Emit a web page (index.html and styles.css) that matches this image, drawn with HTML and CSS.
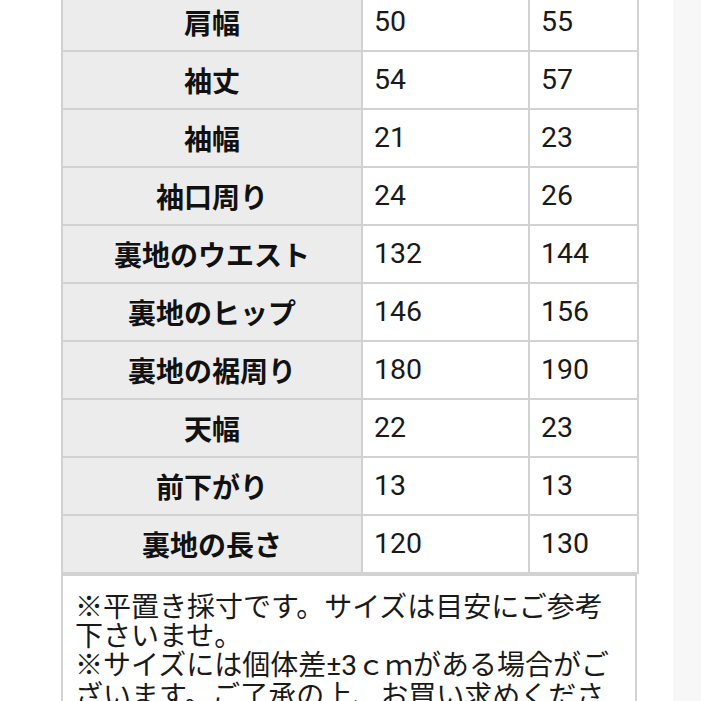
FILE: index.html
```html
<!DOCTYPE html>
<html lang="ja">
<head>
<meta charset="utf-8">
<link rel="stylesheet" href="styles.css">
</head>
<body>
<div class="page">
  <table class="size-table">
    <colgroup>
      <col class="c-label">
      <col class="c-a">
      <col class="c-b">
    </colgroup>
    <tbody>
      <tr><th>肩幅</th><td>50</td><td>55</td></tr>
      <tr><th>袖丈</th><td>54</td><td>57</td></tr>
      <tr><th>袖幅</th><td>21</td><td>23</td></tr>
      <tr><th>袖口周り</th><td>24</td><td>26</td></tr>
      <tr><th>裏地のウエスト</th><td>132</td><td>144</td></tr>
      <tr><th>裏地のヒップ</th><td>146</td><td>156</td></tr>
      <tr><th>裏地の裾周り</th><td>180</td><td>190</td></tr>
      <tr><th>天幅</th><td>22</td><td>23</td></tr>
      <tr><th>前下がり</th><td>13</td><td>13</td></tr>
      <tr><th>裏地の長さ</th><td>120</td><td>130</td></tr>
    </tbody>
  </table>
  <div class="notes">
    <p>※平置き採寸です。サイズは目安にご参考下さいませ。</p>
    <p>※サイズには個体差<span class="latin">±3</span>ｃｍがある場合がございます。ご了承の上、お買い求めください。</p>
  </div>
</div>
</body>
</html>
```

FILE: styles.css
```css
html, body {
  margin: 0;
  padding: 0;
}
body {
  background: linear-gradient(to right, #ffffff 0, #ffffff 673px, #f7f7f7 673px, #f7f7f7 100%);
  height: 701px;
  overflow: hidden;
}
.page {
  width: 576px;
  margin-left: 61px;
  margin-top: -8px;
}
.size-table {
  width: 576px;
  border-collapse: collapse;
  table-layout: fixed;
  border: 2px solid #d2d2d2;
}
.c-label { width: 300px; }
.c-a { width: 167px; }
.c-b { width: 109px; }
.size-table th,
.size-table td {
  border: 2px solid #d2d2d2;
  height: 58px;
  padding: 0;
  box-sizing: border-box;
}
.size-table th {
  background: #ececec;
  font-family: "Noto Sans CJK JP", "Noto Sans", sans-serif;
  font-weight: 700;
  font-size: 28px;
  color: #111;
  text-align: center;
  line-height: 1;
}
.size-table td {
  background: #ffffff;
  font-family: Roboto, "Liberation Sans", sans-serif;
  font-size: 28.5px;
  color: #1a1a1a;
  text-align: left;
  padding-left: 11px;
  line-height: 1;
}
.notes {
  border: 2px solid #d2d2d2;
  padding: 15px 24px 12px 12px;
  background: #ffffff;
  font-family: "Noto Sans CJK JP", sans-serif;
  font-size: 28px;
  line-height: 29px;
  color: #1a1a1a;
}
.notes p {
  margin: 0;
}
.latin {
  font-family: Roboto, "Liberation Sans", sans-serif;
}
```
